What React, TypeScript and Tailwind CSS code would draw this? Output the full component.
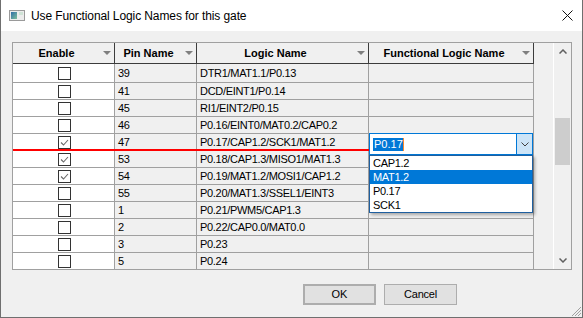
import React from "react";

const rows = [
  { pin: "39", logic: "DTR1/MAT1.1/P0.13", checked: false },
  { pin: "41", logic: "DCD/EINT1/P0.14", checked: false },
  { pin: "45", logic: "RI1/EINT2/P0.15", checked: false },
  { pin: "46", logic: "P0.16/EINT0/MAT0.2/CAP0.2", checked: false },
  { pin: "47", logic: "P0.17/CAP1.2/SCK1/MAT1.2", checked: true },
  { pin: "53", logic: "P0.18/CAP1.3/MISO1/MAT1.3", checked: true },
  { pin: "54", logic: "P0.19/MAT1.2/MOSI1/CAP1.2", checked: true },
  { pin: "55", logic: "P0.20/MAT1.3/SSEL1/EINT3", checked: false },
  { pin: "1", logic: "P0.21/PWM5/CAP1.3", checked: false },
  { pin: "2", logic: "P0.22/CAP0.0/MAT0.0", checked: false },
  { pin: "3", logic: "P0.23", checked: false },
  { pin: "5", logic: "P0.24", checked: false },
];

function Tri() {
  return (
    <svg width="8" height="4" viewBox="0 0 8 4">
      <path d="M0 0 H8 L4 4 Z" fill="#7f7f7f" />
    </svg>
  );
}

function HeaderCell({ className, label }: { className: string; label: string }) {
  return (
    <div className={className}>
      <span className="flex-1 text-center font-bold text-[11px] leading-none text-black">{label}</span>
      <span className="w-[14px] flex justify-center items-center">
        <Tri />
      </span>
    </div>
  );
}

function Checkbox({ checked }: { checked: boolean }) {
  return (
    <div className="w-[13px] h-[13px] border border-[#333333] bg-white flex items-center justify-center">
      {checked && (
        <svg width="11" height="11" viewBox="0 0 11 11">
          <path d="M2 5.5 L4.5 8 L9 3" stroke="#6a6a6a" strokeWidth="1.1" fill="none" />
        </svg>
      )}
    </div>
  );
}

function Chevron({ up }: { up?: boolean }) {
  return (
    <svg width="8" height="5" viewBox="0 0 8 5">
      <path
        d={up ? "M0.5 4.5 L4 1 L7.5 4.5" : "M0.5 0.5 L4 4 L7.5 0.5"}
        stroke="#606060"
        strokeWidth="1.5"
        fill="none"
      />
    </svg>
  );
}

export default function App() {
  return (
    <div className="relative w-[583px] h-[318px] bg-[#f0f0f0] border border-t-0 border-[#6f6f6f] flex flex-col font-['Liberation_Sans',Arial,sans-serif] text-black">
      {/* title bar */}
      <div className="h-[31px] bg-white flex items-center shrink-0">
        <div className="ml-[8px] w-[16px] h-[11px] flex">
          <svg width="16" height="11" viewBox="0 0 16 11">
            <defs>
              <linearGradient id="ig" x1="0" y1="0" x2="1" y2="1">
                <stop offset="0" stopColor="#2f6ea8" />
                <stop offset="1" stopColor="#7fbf9a" />
              </linearGradient>
            </defs>
            <rect x="0.5" y="0.5" width="15" height="10" fill="#ececec" stroke="#9a9a9a" />
            <rect x="2" y="2" width="6" height="7" fill="url(#ig)" />
            <rect x="10" y="2" width="4" height="3" fill="#cfe3d6" />
          </svg>
        </div>
        <span className="ml-[6px] text-[12px] leading-none tracking-[-0.1px]">
          Use Functional Logic Names for this gate
        </span>
        <div className="ml-auto mr-[9px] w-[12px] h-[12px] flex items-center justify-center">
          <svg width="11" height="11" viewBox="0 0 11 11">
            <path d="M0.5 0.5 L10.5 10.5 M10.5 0.5 L0.5 10.5" stroke="#111" strokeWidth="1" />
          </svg>
        </div>
      </div>

      {/* grid */}
      <div className="relative ml-[11px] mt-[11px] w-[560px] h-[228px] border border-[#a0a0a0] flex shrink-0">
        <div className="w-[540px] flex flex-col">
          <div className="flex h-[21px] shrink-0">
            <HeaderCell className="w-[102px] flex items-center border-r border-b border-[#3c3c3c]" label="Enable" />
            <HeaderCell className="w-[82px] flex items-center border-r border-b border-[#3c3c3c]" label="Pin Name" />
            <HeaderCell className="w-[172px] flex items-center border-r border-b border-[#3c3c3c]" label="Logic Name" />
            <HeaderCell
              className="w-[165px] flex items-center border-r border-b border-[#3c3c3c]"
              label="Functional Logic Name"
            />
          </div>
          {rows.map((r, i) => {
            const h =
              i === 0 ? "h-[19px]" : i === rows.length - 1 ? "h-[16px]" : "h-[17px]";
            const b = i === rows.length - 1 ? "border-r border-[#a0a0a0]" : "border-r border-b border-[#a0a0a0]";
            return (
              <div key={i} className={`flex shrink-0 ${h}`}>
                <div className={`w-[102px] bg-white flex items-center justify-center pl-[2px] ${b}`}>
                  <Checkbox checked={r.checked} />
                </div>
                <div className={`w-[82px] flex items-center pl-[3px] text-[11px] leading-none tracking-[-0.3px] ${b}`}>
                  {r.pin}
                </div>
                <div className={`w-[172px] flex items-center pl-[3px] text-[11px] leading-none tracking-[-0.3px] ${b}`}>
                  {r.logic}
                </div>
                <div className={`w-[165px] ${b}`} />
              </div>
            );
          })}
        </div>
        {/* scrollbar */}
        <div className="w-[18px] border-l border-white bg-[#f0f0f0] flex flex-col">
          <div className="h-[17px] flex items-center justify-center">
            <Chevron up />
          </div>
          <div className="h-[58px]" />
          <div className="h-[47px] mx-[1px] bg-[#cdcdcd]" />
          <div className="flex-1" />
          <div className="h-[17px] flex items-center justify-center">
            <Chevron />
          </div>
        </div>

        {/* drop indicator */}
        <div className="absolute left-0 top-[106px] w-[356px] h-[2px] bg-[#ff0000]" />

        {/* combo box */}
        <div className="absolute left-[356px] top-[90px] w-[164px] h-[22px] border border-[#0078d7] bg-white flex">
          <div className="flex-1 flex items-center pl-[3px]">
            <div className="relative h-[13px] bg-[#0078d7] text-white text-[11px] leading-none flex items-center px-[1px]">
              P0.17
              <div className="absolute right-0 top-0 w-px h-[13px] bg-[#ff8728]" />
            </div>
          </div>
          <div className="w-[16px] bg-[#cce4f7] border-l border-[#0078d7] flex items-center justify-center">
            <svg width="8" height="5" viewBox="0 0 8 5">
              <path d="M0.5 0.5 L4 4 L7.5 0.5" stroke="#404040" strokeWidth="1" fill="none" />
            </svg>
          </div>
        </div>

        {/* dropdown list */}
        <div className="absolute left-[356px] top-[112px] w-[164px] h-[58px] border border-[#1f5f9f] bg-white flex flex-col shadow-[2px_2px_3px_rgba(0,0,0,0.3)]">
          <div className="h-[14px] flex items-center pl-[3px] text-[11px] leading-none tracking-[-0.3px]">CAP1.2</div>
          <div className="h-[14px] flex items-center pl-[3px] text-[11px] leading-none tracking-[-0.3px] bg-[#0078d7] text-white">
            MAT1.2
          </div>
          <div className="h-[14px] flex items-center pl-[3px] text-[11px] leading-none tracking-[-0.3px]">P0.17</div>
          <div className="h-[14px] flex items-center pl-[3px] text-[11px] leading-none tracking-[-0.3px]">SCK1</div>
        </div>
      </div>

      {/* buttons */}
      <div className="flex gap-[8px] ml-[302px] mt-[14px]">
        <button className="w-[73px] h-[21px] border-2 border-[#adadad] bg-[#e1e1e1] text-[11px] leading-none flex items-center justify-center">
          OK
        </button>
        <button className="w-[73px] h-[21px] border border-[#adadad] bg-[#e1e1e1] text-[11px] leading-none tracking-[-0.2px] flex items-center justify-center">
          Cancel
        </button>
      </div>

      {/* resize grip */}
      <svg className="absolute right-0 bottom-0" width="11" height="11" viewBox="0 0 11 11">
        <path d="M10 1 L1 10 M10 4 L4 10 M10 7 L7 10" stroke="#a0a0a0" strokeWidth="1" />
      </svg>
    </div>
  );
}
